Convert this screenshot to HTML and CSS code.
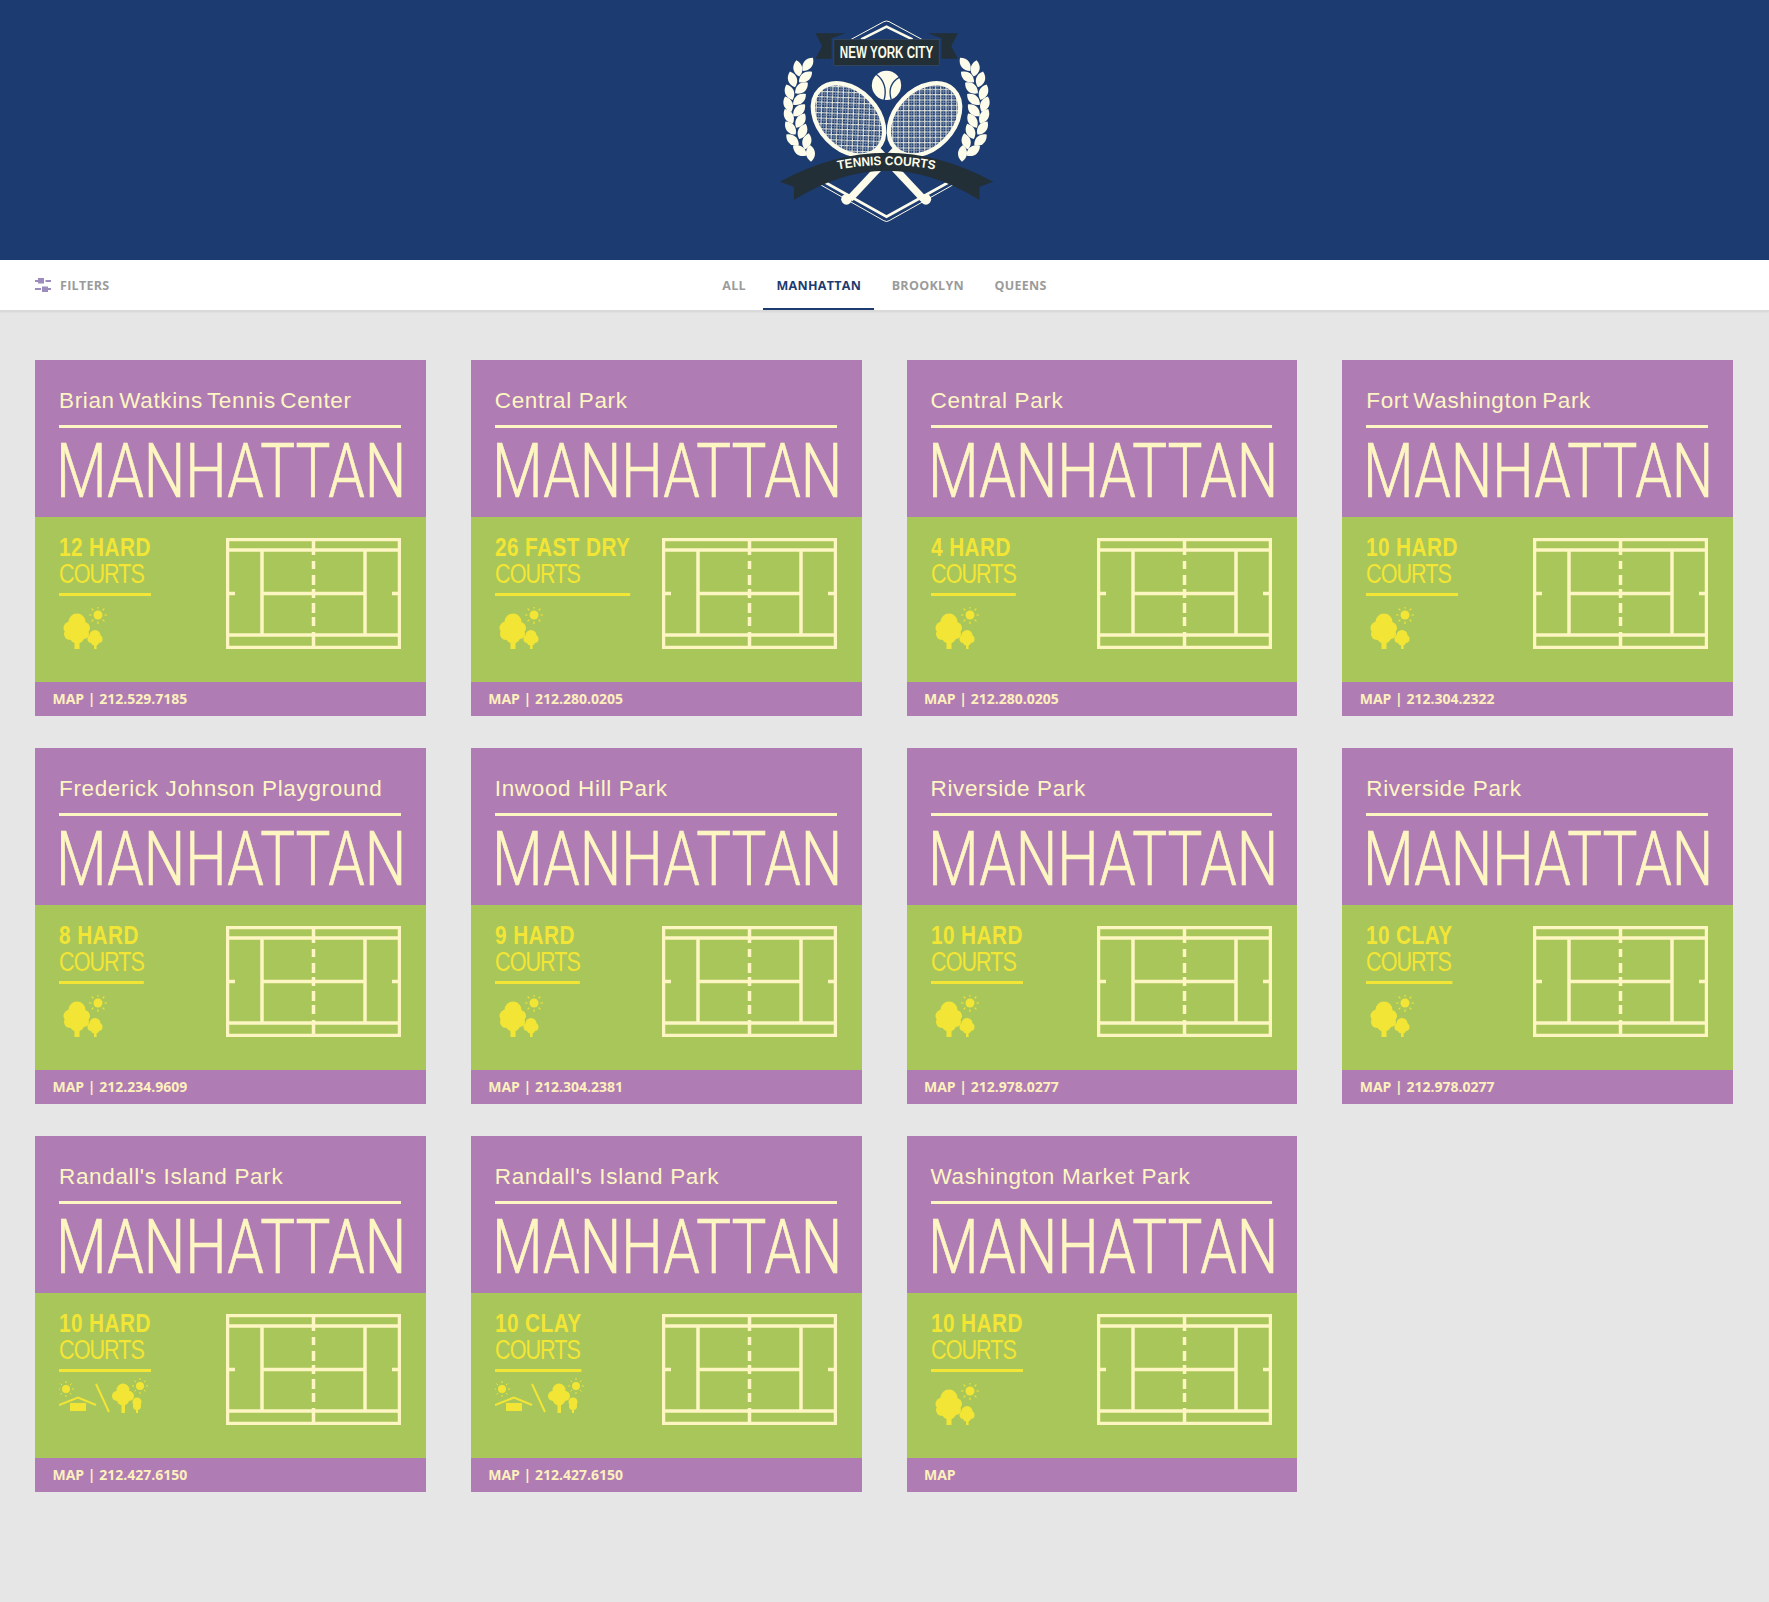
FILE: index.html
```html
<!DOCTYPE html>
<html lang="en">
<head>
<meta charset="utf-8">
<title>New York City Tennis Courts</title>
<link rel="stylesheet" href="styles.css">
</head>
<body>
<svg class="defs" aria-hidden="true">
  <defs>
    <symbol id="court" viewBox="0 0 175 111">
      <g class="court-lines">
        <rect x="1.500" y="1.500" width="172" height="108"/>
        <path d="M1 12H174M1 97H174M36 12V97M139 12V97M36 55.500H139M3 55.500H9M166 55.500H172"/>
        <path d="M87.500 1V17M87.500 23V31M87.500 37V47M87.500 51V60M87.500 65V75M87.500 79V88M87.500 94V110"/>
      </g>
    </symbol>
    <symbol id="trees" viewBox="0 0 50 44">
      <g class="icon-fill">
        <circle cx="18" cy="15" r="8.500"/><circle cx="11" cy="21" r="6.500"/><circle cx="25" cy="21" r="6"/><circle cx="11" cy="27" r="6"/><circle cx="25" cy="27" r="5"/><circle cx="18" cy="29" r="7.500"/>
        <rect x="15.500" y="30" width="5" height="12"/>
        <circle cx="36" cy="28.500" r="5.500"/><circle cx="32.500" cy="32" r="4"/><circle cx="39.500" cy="32" r="4"/><circle cx="36" cy="34" r="4.500"/>
        <rect x="35" y="34" width="2.600" height="8"/>
        <circle cx="39" cy="8" r="4.500"/>
      </g>
      <path class="icon-rays" d="M39 -1V1.500M39 14.500V17M30 8H32.500M45.500 8H48M32.600 1.600L34.400 3.400M43.600 12.600L45.400 14.400M32.600 14.400L34.400 12.600M43.600 3.400L45.400 1.600"/>
    </symbol>
    <symbol id="mixed" viewBox="0 -6 90 44">
      <g class="icon-fill">
        <circle cx="7" cy="7" r="4"/>
        <rect x="11" y="21" width="16" height="8"/>
        <circle cx="64" cy="8" r="6.500"/><circle cx="58" cy="14" r="5"/><circle cx="70" cy="14" r="5"/><circle cx="64" cy="17" r="6.500"/>
        <rect x="62.500" y="18" width="3.500" height="13"/>
        <circle cx="78" cy="20" r="4.500"/><circle cx="78" cy="24" r="4"/>
        <rect x="77" y="24" width="2" height="7"/>
        <circle cx="81" cy="4" r="4"/>
      </g>
      <path class="icon-rays thin" d="M7 -1V1M7 13V15M-1 7H1M13 7H15M1.500 1.500L3 3M11 11L12.500 12.500M1.500 12.500L3 11M11 3L12.500 1.500M81 -4V-2M81 10V12M73 4H75M87 4H89M75.500 -1.500L77 0M85 8L86.500 9.500M75.500 9.500L77 8M85 0L86.500 -1.500"/>
      <path class="icon-line" d="M0 23L19 15.500L37 23M37 2L50 30"/>
    </symbol>
  </defs>
</svg>

<header class="masthead">
  <svg class="logo" viewBox="-16.500 0 900 720" role="img" aria-label="New York City Tennis Courts">
    <defs>
      <pattern id="strings" width="16" height="16" patternUnits="userSpaceOnUse" patternTransform="rotate(46)">
        <rect class="net-line" width="16" height="3.500"/>
        <rect class="net-line" width="3.500" height="16"/>
        <rect class="net-line faint" y="8" width="16" height="2"/>
        <rect class="net-line faint" x="8" width="2" height="16"/>
      </pattern>
      <path id="leaf" d="M0 -25C19 -10 17 12 0 25C-17 12 -19 -10 0 -25Z"/>
      <g id="laurel">
        <use href="#leaf" transform="translate(172 205) rotate(-10)"/>
        <use href="#leaf" transform="translate(202 193) rotate(38)"/>
        <use href="#leaf" transform="translate(156 238) rotate(-18)"/>
        <use href="#leaf" transform="translate(195 231) rotate(52)"/>
        <use href="#leaf" transform="translate(147 277) rotate(-22)"/>
        <use href="#leaf" transform="translate(183 264) rotate(50)"/>
        <use href="#leaf" transform="translate(143 313) rotate(-22)"/>
        <use href="#leaf" transform="translate(177 298) rotate(50)"/>
        <use href="#leaf" transform="translate(145 349) rotate(-30)"/>
        <use href="#leaf" transform="translate(176 331) rotate(45)"/>
        <use href="#leaf" transform="translate(150 384) rotate(-38)"/>
        <use href="#leaf" transform="translate(180 362) rotate(32)"/>
        <use href="#leaf" transform="translate(156 420) rotate(-48)"/>
        <use href="#leaf" transform="translate(186 394) rotate(24)"/>
        <use href="#leaf" transform="translate(178 452) rotate(-55)"/>
        <use href="#leaf" transform="translate(199 424) rotate(14)"/>
        <use href="#leaf" transform="translate(210 460) rotate(-4)"/>
      </g>
      <path id="arc" d="M160 545Q438 445 716 545"/>
    </defs>

    <path class="logo-thin" d="M332 118L430 65Q438 61 446 65L544 118M236 552L430 662Q438 667 446 662L642 552"/>
    <path class="logo-thick" d="M362 118L438 80L516 118M252 546L438 650L626 546"/>

    <g class="handles">
      <path d="M405 444L548 596"/>
      <path d="M471 444L328 596"/>
    </g>
    <g class="handle-caps">
      <circle cx="318" cy="598" r="16"/>
      <circle cx="556" cy="598" r="16"/>
    </g>
    <ellipse class="racket" cx="324" cy="358" rx="124" ry="88" transform="rotate(46 324 358)"/>
    <ellipse class="racket" cx="552" cy="358" rx="124" ry="88" transform="rotate(-46 552 358)"/>

    <g class="logo-cream">
      <use href="#laurel"/>
      <use href="#laurel" transform="translate(876 0) scale(-1 1)"/>
      <circle cx="438" cy="256" r="44"/>
    </g>
    <path class="seam" d="M406 222C432 240 440 270 430 302M476 232C452 246 444 270 452 298"/>

    <path class="ribbon" d="M225 100H315L273 115V176H225L245 138Z"/>
    <path class="ribbon" d="M652 100H562L603 115V176H652L632 138Z"/>
    <rect class="plate" x="280" y="118" width="316" height="78"/>
    <text class="logo-text" x="438" y="175" text-anchor="middle" textLength="280" lengthAdjust="spacingAndGlyphs">NEW YORK CITY</text>

    <path class="ribbon" d="M118 545Q438 371 758 545L717 560V600Q438 424 160 600V560Z"/>
    <text class="logo-text arc-text"><textPath href="#arc" startOffset="50%" text-anchor="middle" textLength="292" lengthAdjust="spacingAndGlyphs">TENNIS COURTS</textPath></text>
  </svg>
</header>

<nav class="bar">
  <div class="filters">
    <svg class="filters-icon" viewBox="0 0 16 14" aria-hidden="true">
      <path d="M3 0H9V5.500H3V4H0V2H3ZM10.500 2H16V4H10.500ZM0 10H6V12H0ZM7 8.500H13V10H16V12H13V14H7Z"/>
    </svg>
    <span>FILTERS</span>
  </div>
  <ul class="tabs">
    <li class="tab">ALL</li>
    <li class="tab active">MANHATTAN</li>
    <li class="tab">BROOKLYN</li>
    <li class="tab">QUEENS</li>
  </ul>
  <div></div>
</nav>

<main class="grid">
  <article class="card">
    <div class="card-head"><h2 class="name tight">Brian Watkins Tennis Center</h2><div class="city">MANHATTAN</div></div>
    <div class="card-body">
      <div class="info"><div class="surface"><strong>12 HARD</strong><span>COURTS</span></div><svg class="amen"><use href="#trees"/></svg></div>
      <svg class="court"><use href="#court"/></svg>
    </div>
    <div class="card-foot">MAP | 212.529.7185</div>
  </article>
  <article class="card">
    <div class="card-head"><h2 class="name">Central Park</h2><div class="city">MANHATTAN</div></div>
    <div class="card-body">
      <div class="info"><div class="surface"><strong>26 FAST DRY</strong><span>COURTS</span></div><svg class="amen"><use href="#trees"/></svg></div>
      <svg class="court"><use href="#court"/></svg>
    </div>
    <div class="card-foot">MAP | 212.280.0205</div>
  </article>
  <article class="card">
    <div class="card-head"><h2 class="name">Central Park</h2><div class="city">MANHATTAN</div></div>
    <div class="card-body">
      <div class="info"><div class="surface"><strong>4 HARD</strong><span>COURTS</span></div><svg class="amen"><use href="#trees"/></svg></div>
      <svg class="court"><use href="#court"/></svg>
    </div>
    <div class="card-foot">MAP | 212.280.0205</div>
  </article>
  <article class="card">
    <div class="card-head"><h2 class="name tight">Fort Washington Park</h2><div class="city">MANHATTAN</div></div>
    <div class="card-body">
      <div class="info"><div class="surface"><strong>10 HARD</strong><span>COURTS</span></div><svg class="amen"><use href="#trees"/></svg></div>
      <svg class="court"><use href="#court"/></svg>
    </div>
    <div class="card-foot">MAP | 212.304.2322</div>
  </article>
  <article class="card">
    <div class="card-head"><h2 class="name">Frederick Johnson Playground</h2><div class="city">MANHATTAN</div></div>
    <div class="card-body">
      <div class="info"><div class="surface"><strong>8 HARD</strong><span>COURTS</span></div><svg class="amen"><use href="#trees"/></svg></div>
      <svg class="court"><use href="#court"/></svg>
    </div>
    <div class="card-foot">MAP | 212.234.9609</div>
  </article>
  <article class="card">
    <div class="card-head"><h2 class="name">Inwood Hill Park</h2><div class="city">MANHATTAN</div></div>
    <div class="card-body">
      <div class="info"><div class="surface"><strong>9 HARD</strong><span>COURTS</span></div><svg class="amen"><use href="#trees"/></svg></div>
      <svg class="court"><use href="#court"/></svg>
    </div>
    <div class="card-foot">MAP | 212.304.2381</div>
  </article>
  <article class="card">
    <div class="card-head"><h2 class="name">Riverside Park</h2><div class="city">MANHATTAN</div></div>
    <div class="card-body">
      <div class="info"><div class="surface"><strong>10 HARD</strong><span>COURTS</span></div><svg class="amen"><use href="#trees"/></svg></div>
      <svg class="court"><use href="#court"/></svg>
    </div>
    <div class="card-foot">MAP | 212.978.0277</div>
  </article>
  <article class="card">
    <div class="card-head"><h2 class="name">Riverside Park</h2><div class="city">MANHATTAN</div></div>
    <div class="card-body">
      <div class="info"><div class="surface"><strong>10 CLAY</strong><span>COURTS</span></div><svg class="amen"><use href="#trees"/></svg></div>
      <svg class="court"><use href="#court"/></svg>
    </div>
    <div class="card-foot">MAP | 212.978.0277</div>
  </article>
  <article class="card">
    <div class="card-head"><h2 class="name">Randall's Island Park</h2><div class="city">MANHATTAN</div></div>
    <div class="card-body">
      <div class="info"><div class="surface"><strong>10 HARD</strong><span>COURTS</span></div><svg class="amen wide"><use href="#mixed"/></svg></div>
      <svg class="court"><use href="#court"/></svg>
    </div>
    <div class="card-foot">MAP | 212.427.6150</div>
  </article>
  <article class="card">
    <div class="card-head"><h2 class="name">Randall's Island Park</h2><div class="city">MANHATTAN</div></div>
    <div class="card-body">
      <div class="info"><div class="surface"><strong>10 CLAY</strong><span>COURTS</span></div><svg class="amen wide"><use href="#mixed"/></svg></div>
      <svg class="court"><use href="#court"/></svg>
    </div>
    <div class="card-foot">MAP | 212.427.6150</div>
  </article>
  <article class="card">
    <div class="card-head"><h2 class="name">Washington Market Park</h2><div class="city">MANHATTAN</div></div>
    <div class="card-body">
      <div class="info"><div class="surface"><strong>10 HARD</strong><span>COURTS</span></div><svg class="amen"><use href="#trees"/></svg></div>
      <svg class="court"><use href="#court"/></svg>
    </div>
    <div class="card-foot">MAP</div>
  </article>
</main>
</body>
</html>
```

FILE: styles.css
```css
* { box-sizing: border-box; }
html, body { margin: 0; padding: 0; }
body {
  background: #e6e6e6;
  font-family: "Open Sans", "Liberation Sans", sans-serif;
  min-height: 1602px;
  overflow-x: hidden;
}
.defs { display: block; width: 0; height: 0; overflow: hidden; }

/* masthead + logo */
.masthead {
  height: 260px;
  background: #1c3b70;
  display: flex;
  justify-content: center;
  align-items: flex-start;
}
.logo { width: 300px; height: 240px; display: block; }
.logo-thin { fill: none; stroke: #fdfbe9; stroke-width: 3; }
.logo-thick { fill: none; stroke: #fdfbe9; stroke-width: 8; }
.logo-cream { fill: #fdfbe9; }
.handles { fill: none; stroke: #fdfbe9; stroke-width: 22; }
.handle-caps { fill: #fdfbe9; }
.racket { fill: url(#strings); stroke: #fdfbe9; stroke-width: 13; }
.net-line { fill: #dfe2d8; }
.net-line.faint { fill: #8d9ab0; }
.seam { fill: none; stroke: #1c3b70; stroke-width: 4; }
.ribbon { fill: #232f36; }
.plate { fill: #232f36; stroke: #3c4d60; stroke-width: 2; }
.logo-text {
  font-family: "Liberation Sans", sans-serif;
  font-weight: 700;
  font-size: 48px;
  fill: #fdfbe9;
}
.arc-text { font-size: 38px; }

/* nav */
.bar {
  height: 51px;
  background: #fff;
  border-bottom: 1px solid #d9d9d9;
  box-shadow: 0 1px 2px rgba(0, 0, 0, .08);
  display: grid;
  grid-template-columns: 1fr auto 1fr;
  align-items: stretch;
  padding: 0 35px;
  font-size: 12.500px;
  font-weight: 700;
  letter-spacing: .3px;
  color: #9b9b9b;
}
.filters { display: flex; align-items: center; gap: 9px; }
.filters-icon { width: 16px; height: 14px; fill: #9c8cbe; }
.tabs { display: flex; gap: 4.500px; list-style: none; margin: 0; padding: 0; }
.tab { padding: 2px 13px 0; display: flex; align-items: center; border-bottom: 2px solid transparent; }
.tab.active { color: #1c3b70; border-bottom-color: #1c3b70; }

/* grid */
.grid {
  display: grid;
  grid-template-columns: repeat(4, minmax(0, 1fr));
  column-gap: 45px;
  row-gap: 32px;
  padding: 49px 36px 0 35px;
}
.card { display: flex; flex-direction: column; height: 356px; min-width: 0; }
.card-head {
  height: 157px;
  background: #b07cb4;
  padding: 0 25px 0 24px;
  overflow: hidden;
}
.name {
  margin: 0;
  height: 67.500px;
  padding-top: 27px;
  border-bottom: 3px solid #fdf6c3;
  color: #fdf6c3;
  font-family: "Liberation Sans", sans-serif;
  font-weight: 400;
  font-size: 22.500px;
  line-height: 28px;
  letter-spacing: .65px;
  white-space: nowrap;
}
.name.tight { word-spacing: -2.500px; }
.city {
  color: #fdf6c3;
  -webkit-text-stroke: .7px #fdf6c3;
  font-family: Roboto, "Liberation Sans", sans-serif;
  font-weight: 300;
  font-size: 76px;
  line-height: 76px;
  margin: 5px 0 0 -3px;
  white-space: nowrap;
  transform: scaleX(.77);
  transform-origin: left center;
}
.card-body {
  height: 165px;
  background: #a9c65a;
  padding: 17px 25px 0 24px;
  display: flex;
  justify-content: space-between;
  align-items: flex-start;
}
.info { min-width: 0; width: 150px; }
.surface {
  display: inline-flex;
  flex-direction: column;
  color: #f3e535;
  font-family: "Liberation Sans", sans-serif;
  border-bottom: 3px solid #f3e535;
  padding-bottom: 5px;
  transform: scaleX(.8);
  transform-origin: left center;
}
.surface strong { font-size: 26px; line-height: 27px; letter-spacing: .5px; white-space: nowrap; }
.surface span { font-size: 27px; line-height: 27px; letter-spacing: -1.200px; white-space: nowrap; }
.amen { display: block; width: 50px; height: 44px; margin-top: 11px; overflow: visible; }
.amen.wide { width: 90px; margin-top: 4px; }
.icon-fill { fill: #f3e535; }
.icon-rays { fill: none; stroke: #f3e535; stroke-width: 1.200; }
.icon-rays.thin { stroke-width: 1; }
.icon-line { fill: none; stroke: #f3e535; stroke-width: 2; }
.court { width: 175px; height: 111px; display: block; flex: none; margin-top: 4px; }
.court-lines { fill: none; stroke: #fdf6c3; stroke-width: 3.500; }
.card-foot {
  height: 34px;
  background: #b07cb4;
  color: #fdf0bd;
  font-size: 14px;
  font-weight: 700;
  line-height: 34px;
  padding-left: 17.500px;
}
```
